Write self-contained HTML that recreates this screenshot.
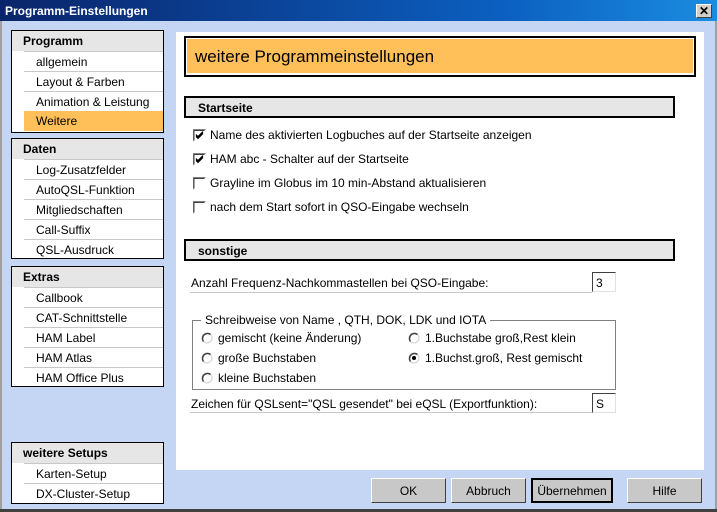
<!DOCTYPE html>
<html><head><meta charset="utf-8"><style>
*{margin:0;padding:0;box-sizing:border-box}
body{width:717px;height:512px;position:relative;overflow:hidden;background:#c5d6f5;font-family:"Liberation Sans",sans-serif;font-size:12px;color:#000}
.a{position:absolute}
#title{left:0;top:0;width:717px;height:21px;background:linear-gradient(90deg,#0a246a,#0c5fc0 70%,#1a8ce0);color:#fff;font-weight:bold;font-size:12px;padding:4px 0 0 5px}
#close{left:696px;top:4px;width:16px;height:14px;background:#d4d0c8;border:1px solid;border-color:#fff #404040 #404040 #fff;color:#000;font-size:12px;font-weight:bold;line-height:12px;text-align:center}
.panel{position:absolute;left:11px;width:153px;background:#fff;border:1px solid #000}
.ph{height:20px;background:#e6e6e6;font-weight:bold;padding:3px 0 0 11px}
.it{height:20px;margin-left:12px;padding:3px 0 0 12px;border-top:1px solid #c8c8c8}
.it:first-of-type{border-top:none}
.sel{background:#ffc05a;border-top:none}
#content{left:176px;top:32px;width:528px;height:438px;background:#fff}
.hdr{position:absolute;left:184px;width:491px;height:22px;background:#e6e6e6;border:2px solid #000;font-weight:bold;padding:3px 0 0 12px}
.cb{position:absolute;left:193px;width:13px;height:13px}
.lbl{position:absolute}
.rb{position:absolute;width:12px;height:12px}
.inp{position:absolute;width:24px;height:20px;border:1px solid;border-color:#404040 #e0e0e0 #e0e0e0 #404040;background:#fff;padding:3px 0 0 3px}
.ul{position:absolute;left:190px;width:402px;height:1px;background:#c8c8c8}
.btn{position:absolute;top:478px;height:25px;background:#c8c8c8;border:1px solid;border-color:#fff #404040 #404040 #fff;text-align:center;padding-top:5px}
</style></head><body>
<div class="a" id="title">Programm-Einstellungen</div>
<div class="a" id="close">✕</div>
<div class="a" style="left:0;top:21px;width:2px;height:491px;background:#a0a0a0"></div>
<div class="a" style="left:715px;top:21px;width:2px;height:491px;background:#a0a0a0"></div>
<div class="a" style="left:0;top:509px;width:717px;height:3px;background:#404040"></div>

<div class="panel" style="top:30px;height:103px"><div class="ph">Programm</div><div class="it">allgemein</div><div class="it">Layout &amp; Farben</div><div class="it">Animation &amp; Leistung</div><div class="it sel">Weitere</div></div>
<div class="panel" style="top:138px;height:121px"><div class="ph">Daten</div><div class="it">Log-Zusatzfelder</div><div class="it">AutoQSL-Funktion</div><div class="it">Mitgliedschaften</div><div class="it">Call-Suffix</div><div class="it">QSL-Ausdruck</div></div>
<div class="panel" style="top:266px;height:121px"><div class="ph">Extras</div><div class="it">Callbook</div><div class="it">CAT-Schnittstelle</div><div class="it">HAM Label</div><div class="it">HAM Atlas</div><div class="it">HAM Office Plus</div></div>
<div class="panel" style="top:442px;height:62px"><div class="ph">weitere Setups</div><div class="it">Karten-Setup</div><div class="it">DX-Cluster-Setup</div></div>

<div class="a" id="content"></div>
<div class="a" style="left:184px;top:36px;width:512px;height:41px;border:2px solid #000;background:#fff"></div>
<div class="a" style="left:187px;top:39px;width:506px;height:34px;background:#ffc05a;font-size:17px;padding:8px 0 0 8px">weitere Programmeinstellungen</div>

<div class="hdr" style="top:96px">Startseite</div>
<svg class="cb" style="top:129px" viewBox="0 0 13 13"><rect x="0" y="0" width="13" height="13" fill="#fff"/><path d="M0 12.5V0.5H12.5" stroke="#808080" fill="none"/><path d="M1 11.5V1.5H11.5" stroke="#404040" fill="none"/><path d="M3 5.5l2 2 5-5M3 6.5l2 2 5-5M3 7.5l2 2 5-5" stroke="#000" fill="none"/></svg><div class="lbl" style="left:210px;top:128px">Name des aktivierten Logbuches auf der Startseite anzeigen</div>
<svg class="cb" style="top:153px" viewBox="0 0 13 13"><rect x="0" y="0" width="13" height="13" fill="#fff"/><path d="M0 12.5V0.5H12.5" stroke="#808080" fill="none"/><path d="M1 11.5V1.5H11.5" stroke="#404040" fill="none"/><path d="M3 5.5l2 2 5-5M3 6.5l2 2 5-5M3 7.5l2 2 5-5" stroke="#000" fill="none"/></svg><div class="lbl" style="left:210px;top:152px">HAM abc - Schalter auf der Startseite</div>
<svg class="cb" style="top:177px" viewBox="0 0 13 13"><rect x="0" y="0" width="13" height="13" fill="#fff"/><path d="M0 12.5V0.5H12.5" stroke="#808080" fill="none"/><path d="M1 11.5V1.5H11.5" stroke="#404040" fill="none"/></svg><div class="lbl" style="left:210px;top:176px">Grayline im Globus im 10 min-Abstand aktualisieren</div>
<svg class="cb" style="top:201px" viewBox="0 0 13 13"><rect x="0" y="0" width="13" height="13" fill="#fff"/><path d="M0 12.5V0.5H12.5" stroke="#808080" fill="none"/><path d="M1 11.5V1.5H11.5" stroke="#404040" fill="none"/></svg><div class="lbl" style="left:210px;top:200px">nach dem Start sofort in QSO-Eingabe wechseln</div>

<div class="hdr" style="top:239px">sonstige</div>
<div class="lbl" style="left:191px;top:276px">Anzahl Frequenz-Nachkommastellen bei QSO-Eingabe:</div>
<div class="ul" style="top:292px"></div>
<div class="inp" style="left:592px;top:272px">3</div>

<div class="a" style="left:192px;top:320px;width:424px;height:70px;border:1px solid #808080"></div>
<div class="lbl" style="left:201px;top:313px;background:#fff;padding:0 4px">Schreibweise von Name , QTH, DOK, LDK und IOTA</div>
<svg class="rb" style="left:201px;top:332px" viewBox="0 0 12 12"><circle cx="6" cy="6" r="5" fill="#fff" stroke="#d0d0d0"/><path d="M9.5 2.5A5 5 0 0 0 2.5 9.5" stroke="#404040" fill="none" stroke-width="1.5"/></svg><div class="lbl" style="left:218px;top:331px">gemischt (keine Änderung)</div>
<svg class="rb" style="left:201px;top:352px" viewBox="0 0 12 12"><circle cx="6" cy="6" r="5" fill="#fff" stroke="#d0d0d0"/><path d="M9.5 2.5A5 5 0 0 0 2.5 9.5" stroke="#404040" fill="none" stroke-width="1.5"/></svg><div class="lbl" style="left:218px;top:351px">große Buchstaben</div>
<svg class="rb" style="left:201px;top:372px" viewBox="0 0 12 12"><circle cx="6" cy="6" r="5" fill="#fff" stroke="#d0d0d0"/><path d="M9.5 2.5A5 5 0 0 0 2.5 9.5" stroke="#404040" fill="none" stroke-width="1.5"/></svg><div class="lbl" style="left:218px;top:371px">kleine Buchstaben</div>
<svg class="rb" style="left:408px;top:332px" viewBox="0 0 12 12"><circle cx="6" cy="6" r="5" fill="#fff" stroke="#d0d0d0"/><path d="M9.5 2.5A5 5 0 0 0 2.5 9.5" stroke="#404040" fill="none" stroke-width="1.5"/></svg><div class="lbl" style="left:425px;top:331px">1.Buchstabe groß,Rest klein</div>
<svg class="rb" style="left:408px;top:352px" viewBox="0 0 12 12"><circle cx="6" cy="6" r="5" fill="#fff" stroke="#d0d0d0"/><path d="M9.5 2.5A5 5 0 0 0 2.5 9.5" stroke="#404040" fill="none" stroke-width="1.5"/><circle cx="6" cy="6" r="2" fill="#000"/></svg><div class="lbl" style="left:425px;top:351px">1.Buchst.groß, Rest gemischt</div>

<div class="lbl" style="left:191px;top:397px">Zeichen für QSLsent="QSL gesendet" bei eQSL (Exportfunktion):</div>
<div class="ul" style="top:412px"></div>
<div class="inp" style="left:592px;top:393px">S</div>

<div class="btn" style="left:371px;width:75px">OK</div>
<div class="btn" style="left:451px;width:75px">Abbruch</div>
<div class="btn" style="left:531px;width:82px;border:2px solid #000;padding-top:4px">Übernehmen</div>
<div class="btn" style="left:627px;width:75px">Hilfe</div>
</body></html>
